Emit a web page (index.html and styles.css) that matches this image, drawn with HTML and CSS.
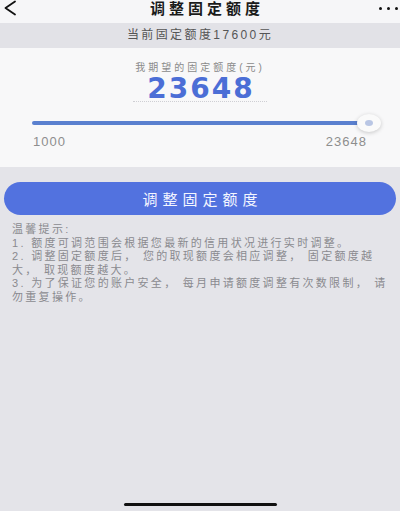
FILE: index.html
```html
<!DOCTYPE html>
<html lang="zh-CN">
<head>
    <meta charset="UTF-8">
    <meta name="viewport" content="width=device-width, initial-scale=1.0">
    <title>调整固定额度</title>
    <link rel="stylesheet" href="styles.css">
</head>
<body>
    <div class="navbar">
        <svg class="voltar" width="14" height="16" viewBox="0 0 14 16">
            <path d="M12 1.5 L2.5 8 L12 14.5" fill="none" stroke="#111" stroke-width="1.8" stroke-linecap="round" stroke-linejoin="round"/>
        </svg>
        <h1 class="titulo">调整固定额度</h1>
        <div class="mais">
            <span></span><span></span><span></span>
        </div>
    </div>

    <div class="atual">当前固定额度17600元</div>

    <div class="cartao">
        <p class="rotulo">我期望的固定额度(元)</p>
        <div class="valor"><span>23648</span></div>

        <div class="slider">
            <div class="trilho"></div>
            <div class="botao-slider"><span></span></div>
        </div>
        <div class="limites">
            <span>1000</span>
            <span>23648</span>
        </div>
    </div>

    <button class="confirmar">调整固定额度</button>

    <div class="dicas">
        <p>温馨提示:</p>
        <p>1. 额度可调范围会根据您最新的信用状况进行实时调整。</p>
        <p>2. 调整固定额度后， 您的取现额度会相应调整， 固定额度越大， 取现额度越大。</p>
        <p>3. 为了保证您的账户安全， 每月申请额度调整有次数限制， 请勿重复操作。</p>
    </div>

    <div class="home"></div>
</body>
</html>
```

FILE: styles.css
```css
* {
    box-sizing: border-box;
}

body {
    margin: 0;
    min-height: 100vh;
    display: flex;
    flex-direction: column;
    background-color: #e4e4e9;
    font-family: "Liberation Sans", "Noto Sans CJK SC", sans-serif;
    color: #333;
}

p {
    margin: 0;
}

.navbar {
    height: 23px;
    display: flex;
    align-items: flex-start;
    justify-content: space-between;
    background-color: #f6f6f8;
}

.voltar {
    margin: 0 0 0 3px;
}

.titulo {
    margin: 0;
    font-size: 15px;
    line-height: 17px;
    letter-spacing: 4px;
    font-weight: 600;
    color: #1a1a1a;
    padding-left: 18px;
}

.mais {
    display: flex;
    gap: 5px;
    padding: 7px 2px 0 0;
}

.mais span {
    width: 3px;
    height: 3px;
    border-radius: 50%;
    background-color: #111;
}

.atual {
    height: 25px;
    line-height: 25px;
    text-align: center;
    background-color: #e2e2e7;
    font-size: 12px;
    letter-spacing: 2.4px;
    color: #555;
}

.cartao {
    background-color: #f8f8f9;
    padding: 13px 0 18px;
}

.rotulo {
    text-align: center;
    font-size: 10px;
    line-height: 14px;
    letter-spacing: 3px;
    color: #8a8a8a;
}

.valor {
    text-align: center;
    margin-top: 2px;
}

.valor span {
    display: inline-block;
    width: 134px;
    font-family: "DejaVu Sans", sans-serif;
    font-weight: bold;
    font-size: 28px;
    line-height: 24px;
    letter-spacing: 2px;
    text-indent: 2px;
    color: #4b6ed6;
    border-bottom: 1px dotted #cfcfd4;
}

.slider {
    position: relative;
    height: 20px;
    margin: 11px 40px 0 32px;
    display: flex;
    align-items: center;
}

.trilho {
    flex: 1;
    height: 4px;
    border-radius: 2px;
    background-color: #5a80cf;
}

.botao-slider {
    position: absolute;
    right: -21px;
    top: 1px;
    width: 24px;
    height: 18px;
    border-radius: 50%;
    background-color: #fafafa;
    box-shadow: 0 1px 4px rgba(0, 0, 0, 0.2);
    display: flex;
    align-items: center;
    justify-content: center;
}

.botao-slider span {
    width: 8px;
    height: 6px;
    border-radius: 50%;
    background-color: #b9c6e4;
}

.limites {
    display: flex;
    justify-content: space-between;
    padding: 0 33px;
    margin-top: 2px;
    font-size: 13px;
    line-height: 14px;
    letter-spacing: 1px;
    color: #8e8e8e;
}

.confirmar {
    margin: 15px 4px 0;
    height: 33px;
    border: none;
    border-radius: 17px;
    background-color: #5272df;
    color: #f4f6ff;
    font-family: "Noto Sans CJK SC", sans-serif;
    font-size: 15px;
    letter-spacing: 5px;
    text-indent: 5px;
}

.dicas {
    margin-top: 8px;
    padding: 0 8px 0 12px;
    font-size: 11px;
    line-height: 13.6px;
    letter-spacing: 2.3px;
    color: #8a8a8f;
}

.home {
    margin: auto auto 5px;
    width: 153px;
    height: 3px;
    border-radius: 2px;
    background-color: #111;
}
```
